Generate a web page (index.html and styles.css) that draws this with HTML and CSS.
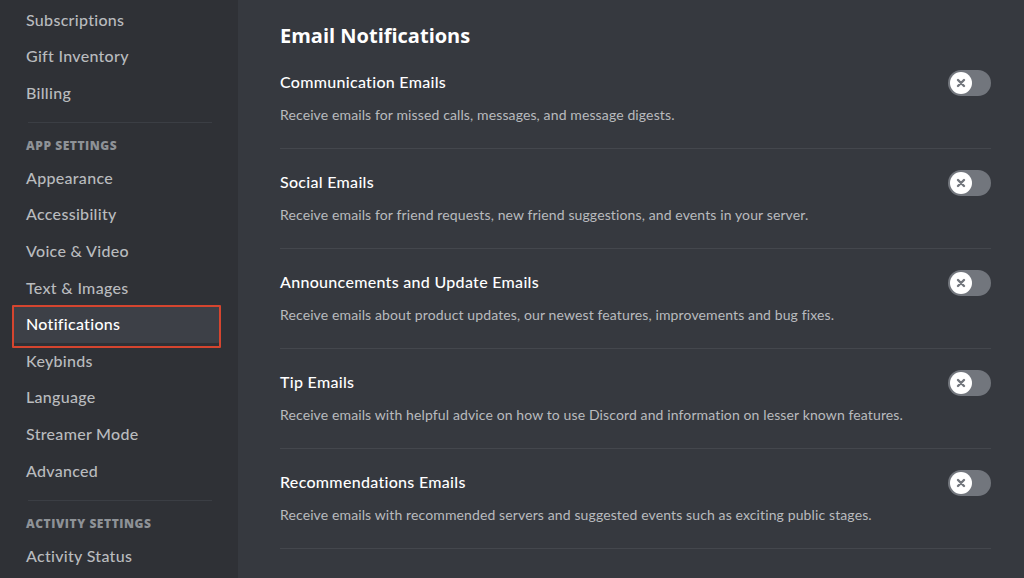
FILE: index.html
```html
<!DOCTYPE html>
<html lang="en">
<head>
<meta charset="utf-8">
<title>Notifications</title>
<link rel="stylesheet" href="styles.css">
</head>
<body>
<div class="app">
  <nav class="sidebar">
    <div class="nav-item">Subscriptions</div>
    <div class="nav-item">Gift Inventory</div>
    <div class="nav-item">Billing</div>
    <div class="nav-divider"></div>
    <div class="nav-header">App Settings</div>
    <div class="nav-item">Appearance</div>
    <div class="nav-item">Accessibility</div>
    <div class="nav-item">Voice &amp; Video</div>
    <div class="nav-item">Text &amp; Images</div>
    <div class="nav-item selected">Notifications</div>
    <div class="nav-item">Keybinds</div>
    <div class="nav-item">Language</div>
    <div class="nav-item">Streamer Mode</div>
    <div class="nav-item">Advanced</div>
    <div class="nav-divider"></div>
    <div class="nav-header">Activity Settings</div>
    <div class="nav-item">Activity Status</div>
  </nav>
  <main class="content">
    <h2 class="heading">Email Notifications</h2>
    <div class="row">
      <div class="row-top">
        <div class="title">Communication Emails</div>
        <div class="toggle"><span class="knob"><svg viewBox="0 0 10 10" width="10" height="10"><path d="M2 2L8 8M8 2L2 8" stroke="#72767d" stroke-width="2.4" stroke-linecap="round"/></svg></span></div>
      </div>
      <div class="desc">Receive emails for missed calls, messages, and message digests.</div>
    </div>
    <div class="row">
      <div class="row-top">
        <div class="title">Social Emails</div>
        <div class="toggle"><span class="knob"><svg viewBox="0 0 10 10" width="10" height="10"><path d="M2 2L8 8M8 2L2 8" stroke="#72767d" stroke-width="2.4" stroke-linecap="round"/></svg></span></div>
      </div>
      <div class="desc">Receive emails for friend requests, new friend suggestions, and events in your server.</div>
    </div>
    <div class="row">
      <div class="row-top">
        <div class="title">Announcements and Update Emails</div>
        <div class="toggle"><span class="knob"><svg viewBox="0 0 10 10" width="10" height="10"><path d="M2 2L8 8M8 2L2 8" stroke="#72767d" stroke-width="2.4" stroke-linecap="round"/></svg></span></div>
      </div>
      <div class="desc">Receive emails about product updates, our newest features, improvements and bug fixes.</div>
    </div>
    <div class="row">
      <div class="row-top">
        <div class="title">Tip Emails</div>
        <div class="toggle"><span class="knob"><svg viewBox="0 0 10 10" width="10" height="10"><path d="M2 2L8 8M8 2L2 8" stroke="#72767d" stroke-width="2.4" stroke-linecap="round"/></svg></span></div>
      </div>
      <div class="desc">Receive emails with helpful advice on how to use Discord and information on lesser known features.</div>
    </div>
    <div class="row">
      <div class="row-top">
        <div class="title">Recommendations Emails</div>
        <div class="toggle"><span class="knob"><svg viewBox="0 0 10 10" width="10" height="10"><path d="M2 2L8 8M8 2L2 8" stroke="#72767d" stroke-width="2.4" stroke-linecap="round"/></svg></span></div>
      </div>
      <div class="desc">Receive emails with recommended servers and suggested events such as exciting public stages.</div>
    </div>
  </main>
</div>
</body>
</html>
```

FILE: styles.css
```css
html, body {
  margin: 0;
  padding: 0;
  height: 100%;
  overflow: hidden;
}
body {
  font-family: Lato, "Open Sans", "Liberation Sans", sans-serif;
  background: #36393f;
}
.app {
  display: flex;
  height: 578px;
}
.sidebar {
  width: 238px;
  flex: none;
  box-sizing: border-box;
  background: #2f3136;
  padding: 1.7px 17px 0 12px;
  display: flex;
  flex-direction: column;
}
.nav-item {
  position: relative;
  height: 36.6px;
  line-height: 36.6px;
  padding-left: 14px;
  font-size: 16px;
  font-weight: 500;
  letter-spacing: 0.3px;
  color: #b9bbbe;
  border-radius: 4px;
  white-space: nowrap;
  flex: none;
}
.nav-item.selected {
  color: #fff;
  background: #3d4047;
}
.nav-item.selected::after {
  content: "";
  position: absolute;
  left: 0;
  right: 0;
  top: -1px;
  bottom: -5px;
  border: 2px solid #d5452f;
  border-radius: 1px;
}
.nav-divider {
  height: 1px;
  margin: 10.7px 9px 0 16px;
  background: #3b3e44;
  flex: none;
}
.nav-header {
  margin: 15px 0 5.7px 14px;
  height: 16px;
  line-height: 16px;
  font-family: "Open Sans", Lato, sans-serif;
  font-size: 12px;
  font-weight: 800;
  letter-spacing: 0.55px;
  text-transform: uppercase;
  color: #8e9297;
  flex: none;
}
.content {
  flex: 1;
  padding: 23px 33px 0 42px;
  box-sizing: border-box;
}
.heading {
  margin: 0;
  height: 26px;
  line-height: 26px;
  font-family: "Open Sans", Lato, sans-serif;
  font-size: 20px;
  font-weight: 700;
  color: #fff;
}
.row {
  padding: 21px 0 23px;
  border-bottom: 1px solid #44474d;
}
.row-top {
  display: flex;
  align-items: center;
  justify-content: space-between;
  height: 24px;
}
.title {
  font-size: 16px;
  font-weight: 500;
  letter-spacing: 0.3px;
  color: #fff;
  line-height: 24px;
}
.desc {
  margin-top: 11px;
  font-size: 14px;
  line-height: 20px;
  letter-spacing: 0.12px;
  color: #b9bbbe;
}
.toggle {
  width: 43px;
  height: 26px;
  border-radius: 13px;
  background: #72767d;
  display: flex;
  align-items: center;
  padding: 0 2px;
  box-sizing: border-box;
  margin-top: 2px;
}
.knob {
  width: 22px;
  height: 22px;
  border-radius: 50%;
  background: #fff;
  display: flex;
  align-items: center;
  justify-content: center;
}
.knob svg {
  display: block;
}
```
